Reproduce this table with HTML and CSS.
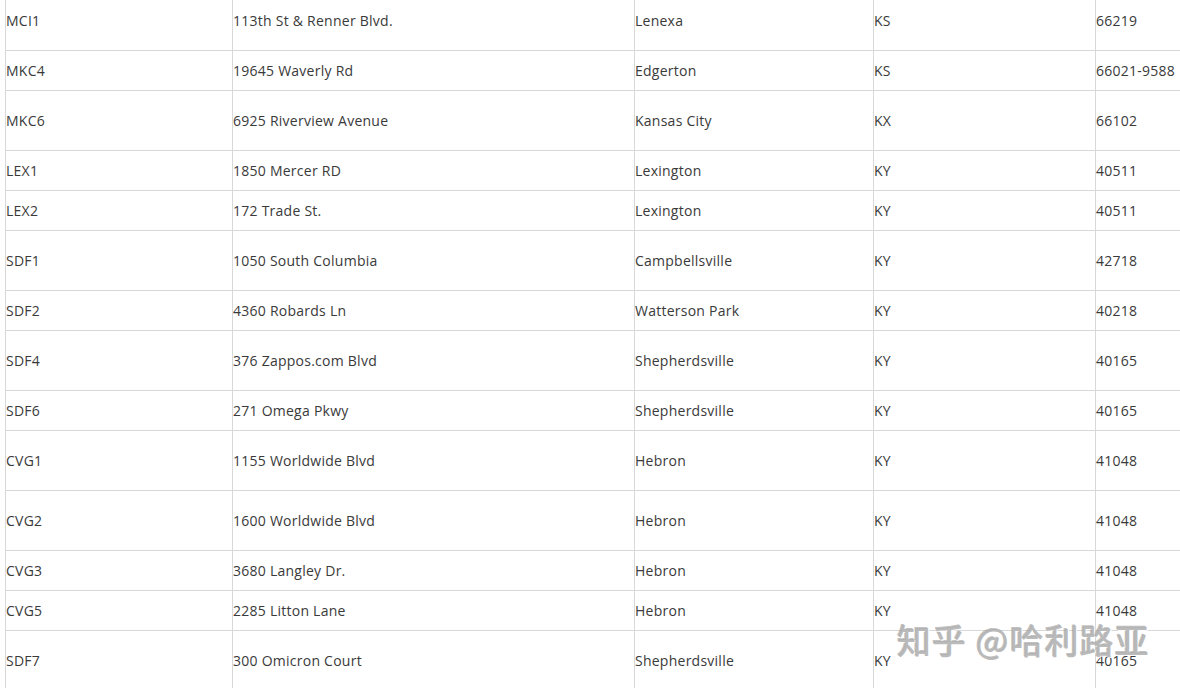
FILE: index.html
```html
<!DOCTYPE html>
<html>
<head>
<meta charset="utf-8">
<link rel="stylesheet" href="styles.css">
</head>
<body>
<div class="sheet">
<table class="grid">
<colgroup><col class="c1"><col class="c2"><col class="c3"><col class="c4"><col class="c5"></colgroup>
<tbody>
<tr class="tall"><td>MCI1</td><td>113th St &amp; Renner Blvd.</td><td>Lenexa</td><td>KS</td><td>66219</td></tr>
<tr class="short"><td>MKC4</td><td>19645 Waverly Rd</td><td>Edgerton</td><td>KS</td><td>66021-9588</td></tr>
<tr class="tall"><td>MKC6</td><td>6925 Riverview Avenue</td><td>Kansas City</td><td>KX</td><td>66102</td></tr>
<tr class="short"><td>LEX1</td><td>1850 Mercer RD</td><td>Lexington</td><td>KY</td><td>40511</td></tr>
<tr class="short"><td>LEX2</td><td>172 Trade St.</td><td>Lexington</td><td>KY</td><td>40511</td></tr>
<tr class="tall"><td>SDF1</td><td>1050 South Columbia</td><td>Campbellsville</td><td>KY</td><td>42718</td></tr>
<tr class="short"><td>SDF2</td><td>4360 Robards Ln</td><td>Watterson Park</td><td>KY</td><td>40218</td></tr>
<tr class="tall"><td>SDF4</td><td>376 Zappos.com Blvd</td><td>Shepherdsville</td><td>KY</td><td>40165</td></tr>
<tr class="short"><td>SDF6</td><td>271 Omega Pkwy</td><td>Shepherdsville</td><td>KY</td><td>40165</td></tr>
<tr class="tall"><td>CVG1</td><td>1155 Worldwide Blvd</td><td>Hebron</td><td>KY</td><td>41048</td></tr>
<tr class="tall"><td>CVG2</td><td>1600 Worldwide Blvd</td><td>Hebron</td><td>KY</td><td>41048</td></tr>
<tr class="short"><td>CVG3</td><td>3680 Langley Dr.</td><td>Hebron</td><td>KY</td><td>41048</td></tr>
<tr class="short"><td>CVG5</td><td>2285 Litton Lane</td><td>Hebron</td><td>KY</td><td>41048</td></tr>
<tr class="tall"><td>SDF7</td><td>300 Omicron Court</td><td>Shepherdsville</td><td>KY</td><td>40165</td></tr>
</tbody>
</table>
<div class="watermark">知乎 @哈利路亚</div>
</div>
</body>
</html>
```
FILE: styles.css
```css
html, body {
  margin: 0;
  padding: 0;
  background: #fff;
  overflow: hidden;
}
.sheet {
  position: relative;
  width: 1180px;
  height: 688px;
  overflow: hidden;
  padding-left: 5px;
  box-sizing: border-box;
}
.grid {
  border-collapse: collapse;
  table-layout: fixed;
  width: 1190px;
  margin-top: -10px;
  font-family: "Open Sans", "Noto Sans", sans-serif;
  font-size: 14px;
  letter-spacing: 0.25px;
  color: #3a3a3a;
}
.c1 { width: 227px; }
.c2 { width: 402px; }
.c3 { width: 239px; }
.c4 { width: 222px; }
.c5 { width: 100px; }
.grid td {
  border: 1px solid #d8d8d8;
  padding: 0;
  vertical-align: middle;
  white-space: nowrap;
  overflow: hidden;
}
.tall td { height: 59px; }
.short td { height: 39px; }
.watermark {
  position: absolute;
  left: 897px;
  top: 615px;
  font-family: "Noto Sans CJK SC", sans-serif;
  font-size: 34px;
  font-weight: 500;
  letter-spacing: 1px;
  color: rgba(175, 175, 175, 0.85);
  text-shadow: 1px 1px 0 rgba(255,255,255,0.9), -1px -1px 0 rgba(120,120,120,0.45);
}
```
